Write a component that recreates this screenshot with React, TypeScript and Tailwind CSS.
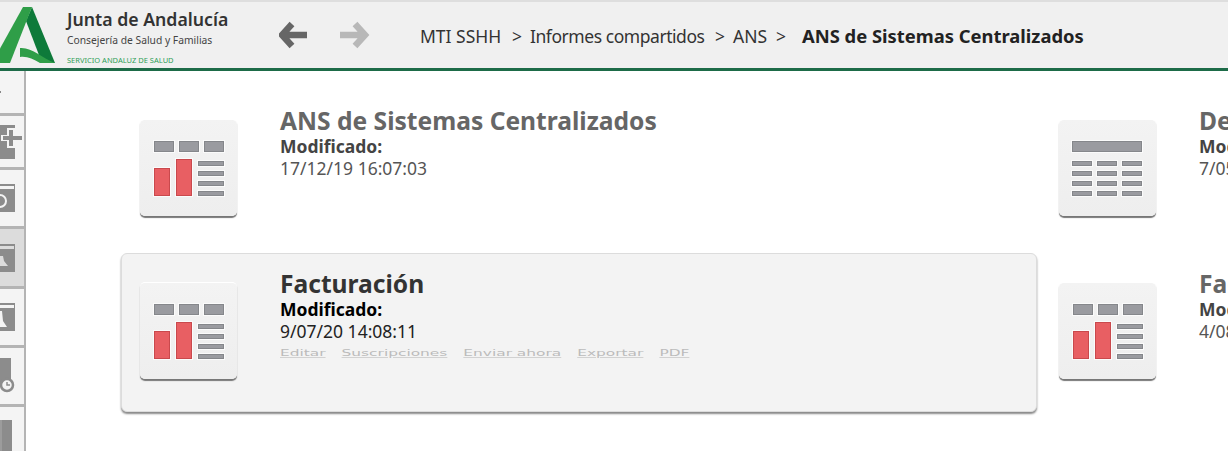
import React from 'react';

const boxClass =
  'w-[97px] h-[97px] mt-[28px] shrink-0 rounded-[5px] bg-gradient-to-b from-[#f3f3f3] to-[#eeeeee] border-t border-white shadow-[0_2px_1px_#777]';

const Block = ({ x, y, w, h }: { x: number; y: number; w: number; h: number }) => (
  <>
    <rect x={x - 1} y={y - 1} width={w + 2} height={h + 2} fill="#fbfbfb" />
    <rect x={x + 0.5} y={y + 0.5} width={w - 1} height={h - 1} fill="#9a9ba0" stroke="#85878b" />
  </>
);

const Bar = ({ x, y, w, h }: { x: number; y: number; w: number; h: number }) => (
  <>
    <rect x={x - 1} y={y - 1} width={w + 2} height={h + 2} fill="#fbfbfb" />
    <rect x={x + 0.5} y={y + 0.5} width={w - 1} height={h - 1} fill="#e85f63" stroke="#c9494d" />
  </>
);

const ChartIcon = () => (
  <div className={boxClass}>
    <svg width="97" height="96" viewBox="0 0 97 96">
      <Block x={14} y={21} w={20} h={11} />
      <Block x={39} y={21} w={20} h={11} />
      <Block x={64} y={21} w={20} h={11} />
      <Bar x={14} y={48} w={16} h={28} />
      <Bar x={36} y={39} w={16} h={37} />
      <Block x={58} y={41} w={26} h={5} />
      <Block x={58} y={51} w={26} h={5} />
      <Block x={58} y={61} w={26} h={5} />
      <Block x={58} y={71} w={26} h={5} />
    </svg>
  </div>
);

const TableIcon = () => (
  <div className={boxClass}>
    <svg width="97" height="96" viewBox="0 0 97 96">
      <Block x={13} y={21} w={70} h={11} />
      {[41, 51, 61, 71].map((y) => (
        <g key={y}>
          <Block x={13} y={y} w={20} h={5} />
          <Block x={38} y={y} w={20} h={5} />
          <Block x={63} y={y} w={20} h={5} />
        </g>
      ))}
    </svg>
  </div>
);

type CardProps = {
  title: string;
  date: string;
  icon: React.ReactNode;
  active?: boolean;
};

const ReportCard = ({ title, date, icon, active }: CardProps) => (
  <div
    className={`h-[159px] rounded-[6px] flex items-start pl-[18px] ${
      active ? 'bg-[#f3f3f3] border border-[#dcdcdc] shadow-[0_2px_2px_#888]' : 'border border-transparent'
    }`}
  >
    {icon}
    <div className={`ml-[43px] pt-[14px] font-['Noto_Sans',sans-serif] ${active ? 'text-[#333]' : 'text-[#666]'}`}>
      <div className="text-[24.6px] leading-[31px] font-bold">{title}</div>
      <div className={`text-[17.5px] leading-[20px] font-bold ${active ? 'text-black' : 'text-[#444]'}`}>Modificado:</div>
      <div className={`text-[17.5px] leading-[24px] ${active ? 'text-[#222]' : 'text-[#555]'}`}>{date}</div>
      {active && (
        <div className="flex gap-[16px] mt-[5px] text-[15.4px] leading-[18px] text-[#bbb] underline font-['DejaVu_Sans',sans-serif] scale-y-[0.6] origin-top-left whitespace-nowrap">
          <span>Editar</span>
          <span>Suscripciones</span>
          <span>Enviar ahora</span>
          <span>Exportar</span>
          <span>PDF</span>
        </div>
      )}
    </div>
  </div>
);

const SideItem = ({ children, selected, h }: { children: React.ReactNode; selected?: boolean; h: string }) => (
  <div
    className={`${h} shrink-0 border-b-[3px] border-[#b4b4b4] flex items-center justify-end overflow-hidden ${
      selected ? 'bg-[#dcdcdc]' : 'bg-[#f4f4f4]'
    }`}
  >
    {children}
  </div>
);

export default function App() {
  return (
    <div className="w-[1228px] h-[451px] overflow-hidden bg-white flex flex-col">
      {/* Cabecera */}
      <div className="h-[71px] shrink-0 bg-[#f0f0f0] border-t-2 border-t-[#dedede] border-b-[3px] border-b-[#1d6b48] flex items-center overflow-hidden">
        <svg width="58" height="66" viewBox="0 2 58 66" className="shrink-0">
          <polygon points="32,7 55,63 42,63 26,21" fill="#0e7a3a" />
          <polygon points="23,7 32,7 10,63 -2,63 -2,52" fill="#2f9e48" />
          <path d="M20 48 C32 47 42 58 55 63 L40 63 C33 59 27 56 20 57 Z" fill="#2f9e48" />
        </svg>
        <div className="w-[210px] ml-[9px] font-['Noto_Sans',sans-serif] shrink-0 pt-[4px]">
          <div className="text-[17.7px] leading-[20px] font-semibold text-[#333]">Junta de Andalucía</div>
          <div className="text-[10.3px] leading-[14px] mt-[4px] text-[#444]">Consejería de Salud y Familias</div>
          <div className="text-[7.5px] leading-[11px] mt-[8px] text-[#2f9e58]">SERVICIO ANDALUZ DE SALUD</div>
        </div>
        <svg width="30" height="28" viewBox="0 0 30 28" className="shrink-0 ml-[2px]">
          <path d="M13 3 L3 14 L13 25 M4 14 H28" fill="none" stroke="#666" strokeWidth="6.5" />
        </svg>
        <svg width="30" height="28" viewBox="0 0 30 28" className="shrink-0 ml-[31px]">
          <path d="M15 3 L25 14 L15 25 M24 14 H0" fill="none" stroke="#b8b8b8" strokeWidth="6.5" />
        </svg>
        <div className="ml-[50px] pt-[2px] flex items-baseline text-[17.5px] text-[#333] font-['Noto_Sans',sans-serif] whitespace-nowrap">
          <span className="w-[92px]">MTI SSHH</span>
          <span className="w-[18px]">&gt;</span>
          <span className="w-[185px] tracking-[-0.45px]">Informes compartidos</span>
          <span className="w-[18px]">&gt;</span>
          <span className="w-[43px]">ANS</span>
          <span className="w-[26px]">&gt;</span>
          <span className="font-bold text-[18.4px] text-[#222]">ANS de Sistemas Centralizados</span>
        </div>
      </div>

      <div className="flex-1 flex min-h-0">
        {/* Barra lateral */}
        <div className="w-[26px] shrink-0 border-r-2 border-[#b4b4b4] flex flex-col overflow-hidden">
          <SideItem h="h-[45px]">
            <span className="mr-[23px] w-[2px] h-[2px] bg-[#888]" />
          </SideItem>
          <SideItem h="h-[54px]">
            <svg width="22" height="34" viewBox="0 0 22 34">
              <rect x="0" y="0" width="15" height="34" fill="#8c8c8c" />
              <path d="M1 10 H7 V3 H15 V10 H22 V16 H15 V23 H7 V16 H1 Z" fill="#f4f4f4" />
              <path d="M9 5 H13 V11 H22 V15 H13 V21 H9 V15 H3 V11 H9 Z" fill="#8c8c8c" />
            </svg>
            <span className="w-[2px]" />
          </SideItem>
          <SideItem h="h-[59px]">
            <svg width="15" height="28" viewBox="0 0 15 28">
              <rect width="15" height="28" fill="#8c8c8c" />
              <rect y="2" width="14" height="3" fill="#f4f4f4" />
              <circle cx="0" cy="17" r="6" fill="none" stroke="#f4f4f4" strokeWidth="2" />
            </svg>
            <span className="w-[9px]" />
          </SideItem>
          <SideItem h="h-[60px]" selected>
            <svg width="15" height="28" viewBox="0 0 15 28">
              <rect width="15" height="28" fill="#8c8c8c" />
              <rect y="2" width="14" height="3" fill="#dcdcdc" />
              <path d="M0 22 V12 H3 L4 17 L8 22 Z" fill="#dcdcdc" />
            </svg>
            <span className="w-[9px]" />
          </SideItem>
          <SideItem h="h-[59px]">
            <svg width="15" height="28" viewBox="0 0 15 28">
              <rect width="15" height="28" fill="#8c8c8c" />
              <rect y="2" width="14" height="3" fill="#f4f4f4" />
              <path d="M0 24 V8 H2 L3 18 L7 24 Z" fill="#f4f4f4" />
            </svg>
            <span className="w-[9px]" />
          </SideItem>
          <SideItem h="h-[59px]">
            <svg width="15" height="36" viewBox="0 0 15 36">
              <rect width="11" height="26" fill="#8c8c8c" />
              <circle cx="7" cy="27" r="6" fill="#f4f4f4" stroke="#8c8c8c" strokeWidth="2.5" />
              <path d="M7 24 V27 H10" fill="none" stroke="#8c8c8c" strokeWidth="1.5" />
            </svg>
            <span className="w-[9px]" />
          </SideItem>
          <div className="flex-1 bg-[#f4f4f4] flex justify-end items-end pr-[12px]">
            <span className="w-[12px] h-[31px] bg-[#8c8c8c] border-l-2 border-[#9c9c9c]" />
          </div>
        </div>

        {/* Informes */}
        <div className="flex-1 min-w-0 overflow-hidden pl-[95px] pt-[19px]">
          <div className="grid grid-cols-[916px_916px] gap-x-[3px] gap-y-[4px]">
            <ReportCard title="ANS de Sistemas Centralizados" date="17/12/19 16:07:03" icon={<ChartIcon />} />
            <ReportCard title="Detalle" date="7/05/20 10:12:45" icon={<TableIcon />} />
            <ReportCard title="Facturación" date="9/07/20 14:08:11" icon={<ChartIcon />} active />
            <ReportCard title="Facturas" date="4/08/20 09:30:12" icon={<ChartIcon />} />
          </div>
        </div>
      </div>
    </div>
  );
}
